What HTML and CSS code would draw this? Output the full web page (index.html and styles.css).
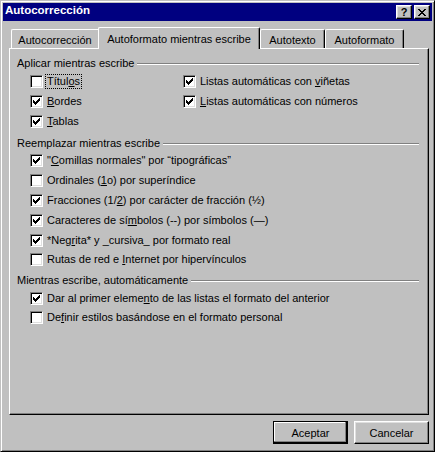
FILE: index.html
```html
<!DOCTYPE html>
<html lang="es">
<head>
<meta charset="utf-8">
<title>Autocorrección</title>
<link rel="stylesheet" href="styles.css">
</head>
<body>
<div class="window">
  <div class="titlebar">
    <span class="title">Autocorrección</span>
    <div class="caption-buttons">
      <span class="cbtn help">?</span>
      <span class="cbtn close"><svg width="8" height="7" viewBox="0 0 8 7" shape-rendering="crispEdges"><path fill="#000" d="M0 0h2v1H0z M6 0h2v1H6z M1 1h2v1H1z M5 1h2v1H5z M2 2h4v1H2z M3 3h2v1H3z M2 4h4v1H2z M1 5h2v1H1z M5 5h2v1H5z M0 6h2v1H0z M6 6h2v1H6z"/></svg></span>
    </div>
  </div>
  <div class="client">
    <div class="tabs">
      <div class="tab t1">Autocorrección</div>
      <div class="tab t2 active">Autoformato mientras escribe</div>
      <div class="tab t3">Autotexto</div>
      <div class="tab t4">Autoformato</div>
    </div>
    <div class="panel">
      <div class="group-head g1"><span class="head-text">Aplicar mientras escribe</span><span class="etch"></span></div>
      <div class="grid2">
        <div class="row"><span class="cb"></span><span class="lbl focus">Títul<u>o</u>s</span></div>
        <div class="row"><span class="cb"><svg class="tick" width="9" height="9" viewBox="0 0 9 9" shape-rendering="crispEdges"><path d="M1 3h1v3H1z M2 4h1v3H2z M3 5h1v3H3z M4 4h1v3H4z M5 3h1v3H5z M6 2h1v3H6z M7 1h1v3H7z"/></svg></span><span class="lbl">Listas automáticas con <u>v</u>iñetas</span></div>
        <div class="row"><span class="cb"><svg class="tick" width="9" height="9" viewBox="0 0 9 9" shape-rendering="crispEdges"><path d="M1 3h1v3H1z M2 4h1v3H2z M3 5h1v3H3z M4 4h1v3H4z M5 3h1v3H5z M6 2h1v3H6z M7 1h1v3H7z"/></svg></span><span class="lbl"><u>B</u>ordes</span></div>
        <div class="row"><span class="cb"><svg class="tick" width="9" height="9" viewBox="0 0 9 9" shape-rendering="crispEdges"><path d="M1 3h1v3H1z M2 4h1v3H2z M3 5h1v3H3z M4 4h1v3H4z M5 3h1v3H5z M6 2h1v3H6z M7 1h1v3H7z"/></svg></span><span class="lbl"><u>L</u>istas automáticas con números</span></div>
        <div class="row"><span class="cb"><svg class="tick" width="9" height="9" viewBox="0 0 9 9" shape-rendering="crispEdges"><path d="M1 3h1v3H1z M2 4h1v3H2z M3 5h1v3H3z M4 4h1v3H4z M5 3h1v3H5z M6 2h1v3H6z M7 1h1v3H7z"/></svg></span><span class="lbl"><u>T</u>ablas</span></div>
      </div>

      <div class="group-head g2"><span class="head-text">Reemplazar mientras escribe</span><span class="etch"></span></div>
      <div class="list">
        <div class="row"><span class="cb"><svg class="tick" width="9" height="9" viewBox="0 0 9 9" shape-rendering="crispEdges"><path d="M1 3h1v3H1z M2 4h1v3H2z M3 5h1v3H3z M4 4h1v3H4z M5 3h1v3H5z M6 2h1v3H6z M7 1h1v3H7z"/></svg></span><span class="lbl">"<u>C</u>omillas normales" por “tipográficas”</span></div>
        <div class="row"><span class="cb"></span><span class="lbl">Ordinales (<u>1</u>o) por superíndice</span></div>
        <div class="row"><span class="cb"><svg class="tick" width="9" height="9" viewBox="0 0 9 9" shape-rendering="crispEdges"><path d="M1 3h1v3H1z M2 4h1v3H2z M3 5h1v3H3z M4 4h1v3H4z M5 3h1v3H5z M6 2h1v3H6z M7 1h1v3H7z"/></svg></span><span class="lbl">Fracciones (1/<u>2</u>) por carácter de fracción (½)</span></div>
        <div class="row"><span class="cb"><svg class="tick" width="9" height="9" viewBox="0 0 9 9" shape-rendering="crispEdges"><path d="M1 3h1v3H1z M2 4h1v3H2z M3 5h1v3H3z M4 4h1v3H4z M5 3h1v3H5z M6 2h1v3H6z M7 1h1v3H7z"/></svg></span><span class="lbl">Caracteres de sí<u>m</u>bolos (--) por símbolos (—)</span></div>
        <div class="row short"><span class="cb"><svg class="tick" width="9" height="9" viewBox="0 0 9 9" shape-rendering="crispEdges"><path d="M1 3h1v3H1z M2 4h1v3H2z M3 5h1v3H3z M4 4h1v3H4z M5 3h1v3H5z M6 2h1v3H6z M7 1h1v3H7z"/></svg></span><span class="lbl">*Neg<u>r</u>ita* y _cursiva_ por formato real</span></div>
        <div class="row"><span class="cb"></span><span class="lbl">Rutas de red e <u>I</u>nternet por hipervínculos</span></div>
      </div>

      <div class="group-head g3"><span class="head-text">Mientras escribe, automáticamente</span><span class="etch"></span></div>
      <div class="list">
        <div class="row short"><span class="cb"><svg class="tick" width="9" height="9" viewBox="0 0 9 9" shape-rendering="crispEdges"><path d="M1 3h1v3H1z M2 4h1v3H2z M3 5h1v3H3z M4 4h1v3H4z M5 3h1v3H5z M6 2h1v3H6z M7 1h1v3H7z"/></svg></span><span class="lbl">Dar al primer eleme<u>n</u>to de las listas el formato del anterior</span></div>
        <div class="row short"><span class="cb"></span><span class="lbl">De<u>f</u>inir estilos basándose en el formato personal</span></div>
      </div>
    </div>
    <div class="footer">
      <button class="btn default">Aceptar</button>
      <button class="btn">Cancelar</button>
    </div>
  </div>
</div>
</body>
</html>
```

FILE: styles.css
```css
* { box-sizing: border-box; }
html, body { margin: 0; padding: 0; }
body {
  background: #c0c0c0;
  font-family: "Liberation Sans", Arial, sans-serif;
  font-size: 11px;
  color: #000;
}
.window {
  width: 435px;
  height: 452px;
  background: #c0c0c0;
  border: 1px solid;
  border-color: #c0c0c0 #000 #000 #c0c0c0;
  box-shadow: inset 1px 1px #fff, inset -1px -1px #808080;
  padding: 2px;
  display: flex;
  flex-direction: column;
}
.titlebar {
  height: 18px;
  flex: none;
  background: #000080;
  display: flex;
  align-items: flex-start;
  padding: 0 2px;
}
.title {
  flex: 1;
  color: #fff;
  font-weight: bold;
  font-size: 11.5px;
  line-height: 13px;
  padding-top: 1px;
}
.caption-buttons {
  display: flex;
  gap: 2px;
  padding-top: 2px;
}
.cbtn {
  width: 16px;
  height: 14px;
  background: #c0c0c0;
  border: 1px solid;
  border-color: #fff #000 #000 #fff;
  box-shadow: inset -1px -1px #808080, inset 1px 1px #dfdfdf;
  display: flex;
  align-items: center;
  justify-content: center;
}
.help {
  font-weight: bold;
  font-size: 11px;
  line-height: 11px;
  padding-top: 1px;
}
.close svg { display: block; }
.client {
  flex: 1;
  padding: 6px 3px 0 6px;
  display: flex;
  flex-direction: column;
}
.tabs {
  height: 21px;
  display: flex;
  align-items: flex-end;
  padding-left: 2px;
  position: relative;
  z-index: 1;
}
.tab {
  height: 19px;
  border-top: 1px solid #fff;
  border-left: 1px solid #fff;
  border-right: 1px solid #000;
  border-radius: 2px 2px 0 0;
  box-shadow: inset -1px 0 #808080;
  text-align: center;
  padding-top: 4px;
  line-height: 13px;
  white-space: nowrap;
  background: #c0c0c0;
}
.t1 { width: 87px; border-right: none; box-shadow: none; border-top-right-radius: 0; }
.t2 { width: 162px; }
.t3 { width: 65px; }
.t4 { width: 79px; }
.tab.active {
  height: 22px;
  margin-bottom: -1px;
  padding-top: 5px;
}
.panel {
  height: 367px;
  flex: none;
  border: 1px solid;
  border-color: #fff #000 #000 #fff;
  box-shadow: inset -1px -1px #808080;
  padding: 8px 9px 0 7px;
}
.group-head {
  display: flex;
  align-items: center;
  height: 13px;
  line-height: 13px;
}
.head-text { white-space: nowrap; }
.etch {
  flex: 1;
  height: 2px;
  border-top: 1px solid #808080;
  border-bottom: 1px solid #fff;
  margin-left: 3px;
}
.g1 { margin-bottom: 2px; }
.g2 { margin-top: 5px; margin-bottom: 1px; }
.g3 { margin-top: 4px; margin-bottom: 2px; }
.grid2 {
  display: grid;
  grid-template-columns: 153px auto;
  padding-left: 13px;
}
.row {
  height: 20px;
  display: flex;
  align-items: flex-start;
  padding-top: 3px;
  padding-left: 13px;
  white-space: nowrap;
}
.grid2 .row { padding-left: 0; }
.row.short { height: 19px; }
.cb {
  width: 13px;
  height: 13px;
  flex: none;
  background: #fff;
  border: 1px solid;
  border-color: #808080 #fff #fff #808080;
  box-shadow: inset 1px 1px #000, inset -1px -1px #dfdfdf;
}
.tick {
  display: block;
  margin: 1px;
  fill: #000;
}
.lbl {
  margin-left: 2px;
  margin-top: -1px;
  padding: 0 1px;
  border: 1px dotted transparent;
  line-height: 13px;
}
.lbl.focus { border-color: #000; }
u { text-decoration: underline; text-decoration-thickness: 1px; text-underline-offset: 1px; }
.footer {
  margin-top: 6px;
  display: flex;
  justify-content: flex-end;
  gap: 6px;
}
.btn {
  width: 75px;
  height: 23px;
  padding: 0;
  font-family: inherit;
  font-size: 11px;
  color: #000;
  background: #c0c0c0;
  border: 1px solid;
  border-color: #fff #000 #000 #fff;
  box-shadow: inset -1px -1px #808080, inset 1px 1px #dfdfdf;
  border-radius: 0;
}
.btn.default {
  border-color: #000;
  box-shadow: inset -1px -1px #000, inset -2px -2px #808080, inset 1px 1px #fff;
}
```
